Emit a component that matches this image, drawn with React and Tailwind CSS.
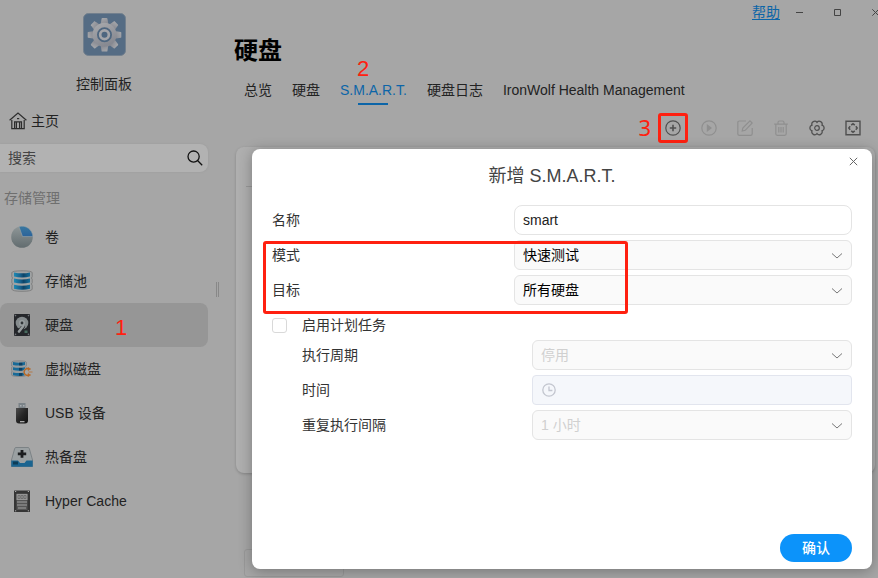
import React from 'react';

const HomeIcon = () => (
  <svg width="18" height="18" viewBox="0 0 18 18" fill="none" stroke="#2e2e2e" strokeWidth="1.2">
    <path d="M0.6 8.2 9 1l8.4 7.2" />
    <path d="M2.8 8v8.6h12.4V8" />
    <path d="M5.6 16.4V9.8h1.8v6.6M10.6 16.4V9.8h1.9v6.6M7.4 9.8h3.2" />
    <path d="M8 6.6h2.2" />
  </svg>
);

const SearchIcon = () => (
  <svg width="16" height="16" viewBox="0 0 16 16" fill="none" stroke="#111" strokeWidth="1.3">
    <circle cx="6.6" cy="6.6" r="5.6" />
    <path d="M10.8 10.8 15.2 15.2" />
  </svg>
);

const TOOTH_ANGLES = [0, 45, 90, 135, 180, 225, 270, 315];

const ControlPanelIcon = () => (
  <svg width="43" height="43" viewBox="0 0 43 43">
    <defs>
      <linearGradient id="gear" x1="0" y1="0" x2="0.4" y2="1">
        <stop offset="0" stopColor="#a9aaad" />
        <stop offset="1" stopColor="#878991" />
      </linearGradient>
    </defs>
    <rect x="0.5" y="0.5" width="42" height="42" rx="5" fill="#556c84" stroke="#73808e" />
    <g fill="url(#gear)">
      {TOOTH_ANGLES.map((a) => (
        <path key={a} d="M17.6 12 18.6 5.4Q18.8 5 19.4 5h4.2q.6 0 .8.4L25.4 12z" transform={`rotate(${a} 21.5 21.8)`} />
      ))}
      <circle cx="21.5" cy="21.8" r="12" />
    </g>
    <circle cx="21.5" cy="21.8" r="6.6" fill="#a4a5a9" stroke="#4e667f" strokeWidth="1.8" />
    <circle cx="21.5" cy="21.8" r="3" fill="#4e667f" />
  </svg>
);

const VolumeIcon = () => (
  <svg width="22" height="22" viewBox="0 0 22 22">
    <defs>
      <linearGradient id="pie" x1="0" y1="0" x2="0" y2="1">
        <stop offset="0" stopColor="#8f9798" />
        <stop offset="1" stopColor="#626c6f" />
      </linearGradient>
      <linearGradient id="slice" x1="0" y1="0" x2="0" y2="1">
        <stop offset="0" stopColor="#3a78a0" />
        <stop offset="1" stopColor="#2b639a" />
      </linearGradient>
    </defs>
    <circle cx="11" cy="11" r="10.8" fill="url(#pie)" />
    <path d="M11.5 10.5 8 0.6A10.8 10.8 0 0 1 21.8 10.5z" fill="url(#slice)" stroke="#a0a8ab" strokeWidth="0.5" />
  </svg>
);

const PoolIcon = () => (
  <svg width="22" height="22" viewBox="0 0 22 22">
    <defs>
      <linearGradient id="pool" x1="0" y1="0" x2="1" y2="0">
        <stop offset="0" stopColor="#1e8ab4" />
        <stop offset="0.4" stopColor="#17608c" />
        <stop offset="0.6" stopColor="#0d4468" />
        <stop offset="1" stopColor="#166f9b" />
      </linearGradient>
    </defs>
    <path d="M.8 2.800Q.8 .8 11 .8t10.200 2v4q0 .9-1 1.200 1 .4 1 1.200v3.600q0 .8-1 1.200 1 .4 1 1.200v3.800Q21.200 21.300 11 21.300T.8 19v-3.800q0-.8 1-1.200-1-.4-1-1.200V9.200q0-.8 1-1.200-1-.3-1-1.200z" fill="#a0a3a4" stroke="#777" strokeWidth="0.8" />
    {[1.800, 8, 14.200].map((y) => (
      <path key={y} transform={`translate(0 ${y})`} d="M3 .6Q11 2.300 19 .6V4.600Q11 6.600 3 4.600z" fill="url(#pool)" />
    ))}
  </svg>
);

const DiskIcon = () => (
  <svg width="22" height="22" viewBox="0 0 22 22">
    <rect x="3" y="0" width="16" height="22" rx="1" fill="#25272b" />
    <g fill="#72757a">
      <circle cx="4.500" cy="1.600" r="0.8" />
      <circle cx="17.500" cy="1.600" r="0.8" />
      <circle cx="4.500" cy="20.400" r="0.8" />
      <circle cx="17.500" cy="20.400" r="0.8" />
    </g>
    <circle cx="11" cy="9" r="6.300" fill="#858b8d" />
    <path d="M8 17.500 12.200 12.500" stroke="#25272b" strokeWidth="3.800" strokeLinecap="round" />
    <path d="M8 17.500 12.500 11.800" stroke="#969c9e" strokeWidth="2.600" strokeLinecap="round" />
    <circle cx="11" cy="9" r="3" fill="#979d9f" />
    <circle cx="11" cy="9" r="1.400" fill="#303438" />
    <rect x="13.500" y="16.500" width="3" height="2.500" fill="#476b5e" />
  </svg>
);

const VirtualDiskIcon = () => (
  <svg width="22" height="18" viewBox="0 0 22 18">
    <path d="M.5 2.500Q.5 .8 8 .8t7.500 1.700v3.300l-.8.7.8.8v3l-.8.8.8.8v3Q15.500 16.500 8 16.500T.5 14.800v-3l.8-.8-.8-.7v-3l.8-.8-.8-.7z" fill="#989c9e" stroke="#777b7d" strokeWidth="0.6" />
    {[1.500, 6.700, 11.900].map((y) => (
      <g key={y} transform={`translate(0 ${y})`}>
        <path d="M2 .5Q8 1.800 14 .5v2.900Q8 4.800 2 3.400z" fill="#196a97" />
        <path d="M8 1.200h3.400v2.700H8z" fill="#0d3f62" />
      </g>
    ))}
    <circle cx="17" cy="12" r="4.600" fill="#a6a6a6" />
    <path d="M18 8.800a3.500 3.500 0 1 0 0 6.400" fill="none" stroke="#b76926" strokeWidth="1.400" />
    <path d="M17 7.600v2.800l2.600-1.400zM17 13.600v2.800l2.600-1.400zM17.500 12h4" fill="#b76926" stroke="#b76926" strokeWidth="0.7" />
  </svg>
);

const UsbIcon = () => (
  <svg width="22" height="22" viewBox="0 0 22 22">
    <defs>
      <linearGradient id="usb" x1="0" y1="0" x2="1" y2="1">
        <stop offset="0" stopColor="#4d4d4d" />
        <stop offset="0.5" stopColor="#252525" />
        <stop offset="1" stopColor="#111" />
      </linearGradient>
    </defs>
    <path d="M7.500 1h7v6h-7z" fill="#7b8388" />
    <path d="M9 3h1.500v1.500H9zM12 3h1.500v1.500H12z" fill="#abb0b3" />
    <path d="M5 6h12v12.500q0 3-3 3H8q-3 0-3-3z" fill="url(#usb)" />
    <path d="M9 19h4.500v1.300H9z" fill="#aaa" />
  </svg>
);

const SpareIcon = () => (
  <svg width="22" height="22" viewBox="0 0 22 22">
    <path d="M5 1.500h12q1 0 1.300 1L21.500 14v6.500h-21V14L3.700 2.500Q4 1.500 5 1.500z" fill="#9aa0a2" stroke="#727a7e" strokeWidth="0.8" />
    <path d="M.3 14.500H7l2 2.500h4.500l2-2.500h6.200v6.200H.3z" fill="#1a6490" />
    <path d="M2 15.500h5v3H2z" fill="#0d3c57" />
    <path d="M9.600 4h2.800v2.600h2.800v2.600h-2.800v2.600H9.600V9.200H6.800V6.600h2.800z" fill="#1b1d1f" />
  </svg>
);

const CacheIcon = () => (
  <svg width="22" height="22" viewBox="0 0 22 22">
    <rect x="3" y="0.500" width="16" height="21.500" rx="0.500" fill="#353535" />
    <path d="M5.500 3.500h11v16.500h-11z" fill="#565656" />
    <path d="M5.500 4h11v6h-11z" fill="#969696" />
    <path d="M7 5.500h2v3H7zM10 5.500h2v3h-2zM13 5.500h2v3h-2z" fill="none" stroke="#5c5c5c" strokeWidth="0.600" />
    <path d="M6 12h10M6 15h10M7 18h8" stroke="#a0a0a0" strokeWidth="1.100" />
    <path d="M4 1.500h1.200M16.800 1.500H18M4 20.800h1.200M16.800 20.800H18" stroke="#aaa" />
  </svg>
);

const toolProps = { width: 16, height: 16, viewBox: '0 0 16 16', fill: 'none', stroke: 'currentColor', strokeWidth: 1.2 };

const AddIcon = () => (
  <svg {...toolProps}>
    <circle cx="8" cy="8" r="7.200" />
    <path d="M8 4.800v6.400M4.800 8h6.400" strokeWidth="1.600" />
  </svg>
);
const RunIcon = () => (
  <svg {...toolProps}>
    <circle cx="8" cy="8" r="7.200" />
    <path d="M6.400 5.200 10 8l-3.600 2.800z" fill="currentColor" />
  </svg>
);
const EditIcon = () => (
  <svg {...toolProps}>
    <path d="M9 1H2.500Q.8 1 .8 2.700v11q0 1.600 1.700 1.600h11q1.700 0 1.700-1.600V8" />
    <path d="M5.200 11l.6-3L13 .9 15.200 3 8.200 10.300z" />
  </svg>
);
const TrashIcon = () => (
  <svg {...toolProps}>
    <path d="M1.200 4.200h13.600M5 4V2.500Q5 1 6.500 1h3Q11 1 11 2.500V4M2.800 4.500v9.300q0 1.500 1.500 1.500h7.400q1.500 0 1.500-1.500V4.500" />
    <path d="M5.800 7v5.500M8 7v5.500M10.200 7v5.500" />
  </svg>
);
const SettingsIcon = () => (
  <svg {...toolProps}>
    <path
      d="M13 5.200A2.900 2.900 0 0 1 13 10.800A2.900 2.900 0 0 1 8 13.600A2.900 2.900 0 0 1 3 10.800A2.900 2.900 0 0 1 3 5.200A2.900 2.900 0 0 1 8 2.400A2.900 2.900 0 0 1 13 5.200z"
      strokeWidth="1.300"
    />
    <circle cx="8" cy="8" r="2.300" />
  </svg>
);
const ScanIcon = () => (
  <svg {...toolProps}>
    <path d="M1 1.200h14v13.600H1z" strokeWidth="1.400" />
    <path d="M6.200 5.200 8 3.800 9.800 5.200M10.800 6.200 12.200 8 10.800 9.800M9.800 10.800 8 12.200 6.200 10.800M5.200 9.800 3.800 8 5.200 6.200" strokeWidth="1.500" />
  </svg>
);

const NAV = [
  { label: '卷', Icon: VolumeIcon },
  { label: '存储池', Icon: PoolIcon },
  { label: '硬盘', Icon: DiskIcon, active: true, mark: '1' },
  { label: '虚拟磁盘', Icon: VirtualDiskIcon },
  { label: 'USB 设备', Icon: UsbIcon },
  { label: '热备盘', Icon: SpareIcon },
  { label: 'Hyper Cache', Icon: CacheIcon },
];

const TABS = [
  { label: '总览' },
  { label: '硬盘' },
  { label: 'S.M.A.R.T.', active: true, mark: '2' },
  { label: '硬盘日志' },
  { label: 'IronWolf Health Management' },
];

const TOOLS = [
  { name: '新增', Icon: AddIcon, mark: '3' },
  { name: '执行', Icon: RunIcon, disabled: true },
  { name: '编辑', Icon: EditIcon, disabled: true },
  { name: '删除', Icon: TrashIcon, disabled: true },
  { name: '设置', Icon: SettingsIcon },
  { name: '扫描', Icon: ScanIcon },
];

function Sidebar() {
  return (
    <aside className="flex w-[208px] shrink-0 flex-col pt-[13px]">
      <div className="flex flex-col items-center gap-[18px]">
        <ControlPanelIcon />
        <span className="text-[#222]">控制面板</span>
      </div>
      <a href="#home" className="mt-[13px] flex h-7 items-center gap-1 pl-[9px] text-[#222]">
        <HomeIcon />
        主页
      </a>
      <div className="mt-[9px] flex h-7 items-center rounded-r-lg bg-[#b2b2b2] pr-[5px] pl-2 shadow-[0_0_2px_#999]">
        <input
          aria-label="搜索"
          placeholder="搜索"
          className="min-w-0 flex-1 bg-transparent outline-none placeholder:text-[#444]"
        />
        <button aria-label="开始搜索">
          <SearchIcon />
        </button>
      </div>
      <h2 className="mt-4 pl-1 text-[#6f6f6f]">存储管理</h2>
      <nav className="mt-[7px] flex flex-col">
        {NAV.map(({ label, Icon, active, mark }) => (
          <a
            key={label}
            href="#nav"
            className={`relative flex h-11 items-center gap-3 rounded-lg pl-[11px] text-[#222] ${active ? 'bg-[#969696]' : ''}`}
          >
            <span className="flex w-[22px] justify-center">
              <Icon />
            </span>
            {label}
            {mark && <span className="absolute top-3 left-[115px] text-[22px] leading-[26px] text-[#ff2010]">{mark}</span>}
          </a>
        ))}
      </nav>
    </aside>
  );
}

function WindowBar() {
  return (
    <div className="-mr-4 flex h-6 items-center justify-end text-[#444]">
      <a href="#help" className="text-[#0c65a8] underline underline-offset-2">帮助</a>
      <button aria-label="最小化" className="flex w-[38px] justify-center">
        <svg width="7" height="7" viewBox="0 0 7 7" stroke="currentColor"><path d="M0 3.500h7" /></svg>
      </button>
      <button aria-label="最大化" className="flex w-[38px] justify-center">
        <svg width="7" height="7" viewBox="0 0 7 7" fill="none" stroke="currentColor"><path d="M.5 .5h6v6h-6z" /></svg>
      </button>
      <button aria-label="关闭窗口" className="flex w-[38px] justify-center">
        <svg width="7" height="7" viewBox="0 0 7 7" stroke="currentColor"><path d="M.3 .3l6.400 6.400M6.700 .3.300 6.700" /></svg>
      </button>
    </div>
  );
}

function Toolbar() {
  return (
    <div className="mt-2 flex h-[30px] items-center justify-end gap-1.5 pr-2.5">
      {TOOLS.map(({ name, Icon, disabled, mark }) => (
        <button
          key={name}
          aria-label={name}
          disabled={disabled}
          className={`relative flex h-[30px] w-[30px] items-center justify-center ${disabled ? 'text-[#8f8f8f]' : 'text-[#505050]'} ${mark ? 'rounded-[3px] border-3 border-[#ff2010]' : ''}`}
        >
          <Icon />
          {mark && (
            <span className="absolute top-[-2px] right-[34px] font-['Noto_Sans'] text-[22px] leading-[26px] text-[#ff2010]">{mark}</span>
          )}
        </button>
      ))}
    </div>
  );
}

function Chevron() {
  return (
    <svg className="pointer-events-none absolute top-3 right-[9px]" width="12" height="8" viewBox="0 0 12 8" fill="none" stroke="#777">
      <path d="M1 1.500l5 4.500 5-4.500" />
    </svg>
  );
}

function SelectField({ id, label, value, disabled }) {
  return (
    <>
      <label htmlFor={id} className="text-[#333]">{label}</label>
      <div className="relative">
        <select
          id={id}
          disabled={disabled}
          className="block h-[30px] w-full appearance-none rounded-md border border-[#e4e4e4] bg-[#fafafa] px-2 text-black opacity-100 disabled:text-[#d0d0d0]"
        >
          <option>{value}</option>
        </select>
        <Chevron />
      </div>
    </>
  );
}

function AddDialog() {
  return (
    <section
      role="dialog"
      aria-labelledby="dialog-title"
      className="absolute top-[149px] right-[6px] bottom-[9px] left-[252px] flex flex-col rounded-lg bg-white shadow-[0_2px_14px_rgba(0,0,0,0.3)]"
    >
      <header className="flex h-14 pr-2.5 pl-2">
        <h2 id="dialog-title" className="flex-1 text-center text-lg leading-[54px] text-[#444]">新增 S.M.A.R.T.</h2>
        <button aria-label="关闭" className="mt-[3px] flex h-[18px] w-[18px] items-center justify-center">
          <svg width="9" height="9" viewBox="0 0 9 9" stroke="#666"><path d="M.8 .8l7.400 7.400M8.200 .8.800 8.200" /></svg>
        </button>
      </header>
      <form className="flex flex-1 flex-col px-5 pb-[7px]" onSubmit={(e) => e.preventDefault()}>
        <div className="grid grid-cols-[242px_minmax(0,1fr)] items-center gap-y-[5px]">
          <label htmlFor="name" className="text-[#333]">名称</label>
          <input id="name" defaultValue="smart" className="h-[30px] w-full rounded-lg border border-[#e4e4e4] px-2 text-[#222] outline-none" />
          <SelectField id="mode" label="模式" value="快速测试" />
          <SelectField id="target" label="目标" value="所有硬盘" />
        </div>
        <label className="mt-[5px] flex h-[30px] items-center gap-[15px] text-[#333]">
          <input type="checkbox" className="h-[15px] w-[15px] appearance-none rounded-[3px] border border-[#d9d9d9] bg-white" />
          启用计划任务
        </label>
        <div className="grid grid-cols-[230px_minmax(0,1fr)] items-center gap-y-[5px] pl-[30px]">
          <SelectField id="cycle" label="执行周期" value="停用" disabled />
          <label htmlFor="time" className="text-[#333]">时间</label>
          <div className="relative">
            <input id="time" disabled className="block h-[30px] w-full rounded border border-[#e2e5ee] bg-[#f5f7fb] pr-2 pl-8" />
            <svg className="absolute top-2 left-[10px]" width="14" height="14" viewBox="0 0 14 14" fill="none" stroke="#c3c6cf" strokeWidth="1.300">
              <circle cx="7" cy="7" r="6.200" />
              <path d="M7 3.500v4h3.400" />
            </svg>
          </div>
          <SelectField id="interval" label="重复执行间隔" value="1 小时" disabled />
        </div>
        <button type="submit" className="mt-auto h-7 w-[72px] self-end rounded-full bg-[#0c93fa] font-medium text-white">确认</button>
      </form>
      <div className="pointer-events-none absolute top-[92px] left-[11px] h-[73px] w-[365px] rounded-[3px] border-3 border-[#ff2010]" />
    </section>
  );
}

export default function App() {
  return (
    <div className="relative flex min-h-screen overflow-hidden bg-[#a6a6a6] font-['Liberation_Sans','Noto_Sans_CJK_SC',sans-serif] text-sm leading-5">
      <Sidebar />
      <div className="flex w-[26px] shrink-0 items-center pl-2">
        <div className="h-[15px] w-[3px] border-x border-[#888]" />
      </div>
      <main className="flex min-w-0 flex-1 flex-col">
        <WindowBar />
        <h1 className="mt-[11px] text-2xl leading-8 font-bold text-black">硬盘</h1>
        <nav className="mt-[13px] flex gap-5 pl-2.5">
          {TABS.map(({ label, active, mark }) => (
            <a
              key={label}
              href="#tab"
              className={`relative flex h-[25px] flex-col items-center justify-between whitespace-nowrap ${active ? 'text-[#0c65a8]' : 'text-[#222]'}`}
            >
              {label}
              {active && <span className="h-0.5 w-[30px] bg-[#0c65a8]" />}
              {mark && <span className="absolute top-[-24px] left-[17px] text-[22px] leading-[26px] text-[#ff2010]">{mark}</span>}
            </a>
          ))}
        </nav>
        <Toolbar />
        <div className="mt-1 mr-[3px] ml-0.5 min-h-[326px] flex-1 rounded-lg bg-[#afafaf] px-2.5 shadow-[0_1px_3px_rgba(0,0,0,0.2)]">
          <div className="h-10 border-b border-[#999]" />
        </div>
        <select
          aria-label="每页条数"
          disabled
          className="mt-[76px] mb-px ml-2.5 h-7 w-[100px] appearance-none rounded-[3px] border border-[#999]"
        />
      </main>
      <AddDialog />
    </div>
  );
}
